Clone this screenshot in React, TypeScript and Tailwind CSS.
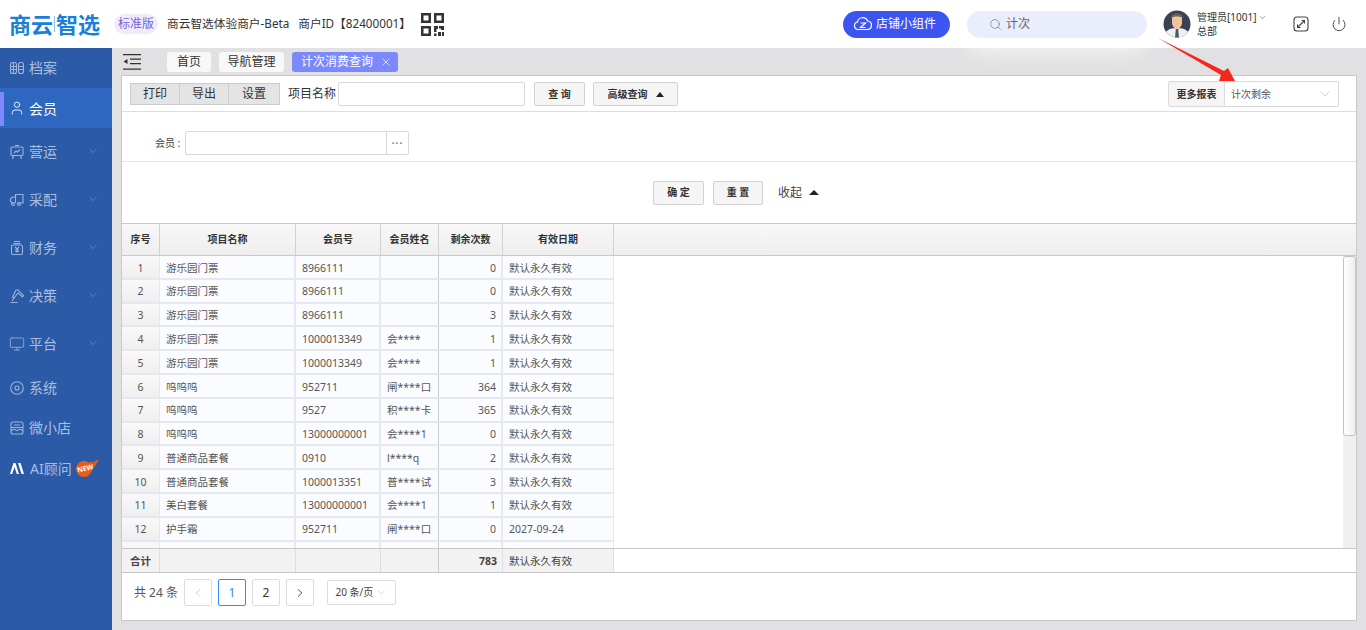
import { ChevronDown, ChevronLeft, ChevronRight, Search, Power, User, Monitor, X } from 'lucide-react'

const font = { fontFamily: '"Noto Sans", "Noto Sans CJK SC", sans-serif' }

const rows = [
  ['1', '游乐园门票', '8966111', '', '0', '默认永久有效'],
  ['2', '游乐园门票', '8966111', '', '0', '默认永久有效'],
  ['3', '游乐园门票', '8966111', '', '3', '默认永久有效'],
  ['4', '游乐园门票', '1000013349', '会****', '1', '默认永久有效'],
  ['5', '游乐园门票', '1000013349', '会****', '1', '默认永久有效'],
  ['6', '呜呜呜', '952711', '闸****口', '364', '默认永久有效'],
  ['7', '呜呜呜', '9527', '积****卡', '365', '默认永久有效'],
  ['8', '呜呜呜', '13000000001', '会****1', '0', '默认永久有效'],
  ['9', '普通商品套餐', '0910', 'l****q', '2', '默认永久有效'],
  ['10', '普通商品套餐', '1000013351', '普****试', '3', '默认永久有效'],
  ['11', '美白套餐', '13000000001', '会****1', '1', '默认永久有效'],
  ['12', '护手霜', '952711', '闸****口', '0', '2027-09-24'],
  ['', '', '', '', '', ''],
]

function Stroke({ children }: { children: React.ReactNode }) {
  return (
    <svg width="16" height="16" viewBox="0 0 16 16" fill="none" stroke="#9db4d8" strokeWidth="1.1" className="shrink-0">
      {children}
    </svg>
  )
}

const icons: Record<string, React.ReactNode> = {
  档案: (
    <Stroke>
      <rect x="1.500" y="2.500" width="6" height="11" rx="2" />
      <rect x="9.500" y="2.500" width="5" height="11" rx="2" />
      <path d="M1.500 6.500h6M1.500 9.500h6M4.500 2.500v11M9.500 6.500h5M9.500 9.500h5" />
    </Stroke>
  ),
  营运: (
    <Stroke>
      <rect x="2" y="3" width="12" height="8.5" rx="1" />
      <path d="M6 1.500h4M4.500 11.500 3.500 15M11.500 11.500l1 3.500M5 9l2-2 1.500 1L11 5.500" />
    </Stroke>
  ),
  采配: (
    <Stroke>
      <path d="M6.500 11V2.500h7.500V11H8.500M5 11H3.500L1.500 9.500V7l2-2h3" />
      <circle cx="4" cy="12" r="1.400" />
      <circle cx="10" cy="12" r="1.400" />
    </Stroke>
  ),
  财务: (
    <Stroke>
      <path d="M5 1.500h6M4.500 3.500h7" />
      <rect x="2.500" y="5" width="11" height="9.500" rx="1.500" />
      <path d="M6 7l2 2 2-2M8 9v3.500M6.200 10h3.600M6.200 11.500h3.600" />
    </Stroke>
  ),
  决策: (
    <Stroke>
      <path d="M7 2 3.500 9l1.500 1L9 5l4.500 4 1-1.500L9 2z" />
      <path d="M1.500 14.500h7M5 10c-1 1-1.500 2-1.500 3" />
    </Stroke>
  ),
  系统: (
    <Stroke>
      <circle cx="8" cy="8" r="6.300" />
      <circle cx="8" cy="8" r="2" />
    </Stroke>
  ),
  微小店: (
    <Stroke>
      <rect x="2" y="2" width="12" height="12" rx="2" />
      <path d="M2 7.500h12M5 5h6M2 10.500c2 0 2-1.500 3-1.500s1.500 1.500 3 1.500 2-1.500 3-1.500 1 1.500 3 1.500" />
    </Stroke>
  ),
}

function NavItem({ label, chevron, tall }: { label: string; chevron?: boolean; tall?: boolean }) {
  return (
    <div className={`flex items-center pr-[13px] pb-[1px] pl-[9px] text-[14px] text-[#a9bfe0] ${tall ? 'h-[48px]' : 'h-[40px]'}`}>
      <span className="mr-[4px] w-[16px]">{label === '平台' ? <Monitor size={16} strokeWidth={1.2} color="#9db4d8" /> : icons[label]}</span>
      <span>{label}</span>
      {chevron && <ChevronDown size={12} strokeWidth={1.2} color="#8ba5cf" className="ml-auto mb-[2px]" />}
    </div>
  )
}

function Sidebar() {
  return (
    <aside className="w-[112px] shrink-0 bg-[#2b5ba6]">
      <NavItem label="档案" />
      <div className="relative flex h-[40px] items-center bg-[#2e67bf] pl-[9px] text-[14px] text-white">
        <span className="absolute top-[4px] left-0 h-[34px] w-[4px] bg-[#8088ff]" />
        <User size={16} strokeWidth={1.3} className="mr-[4px]" />
        会员
      </div>
      <NavItem label="营运" chevron tall />
      <NavItem label="采配" chevron tall />
      <NavItem label="财务" chevron tall />
      <NavItem label="决策" chevron tall />
      <NavItem label="平台" chevron tall />
      <NavItem label="系统" />
      <NavItem label="微小店" />
      <div className="flex h-[40px] items-center pl-[9px] text-[14px] text-[#a9bfe0]">
        <svg width="14" height="11" viewBox="0 0 14 11" fill="#fff" className="mr-[6px] ml-px">
          <path d="M0 11 3.500 0h2L9 11H6.800L4.500 4 2.200 11zM6 0h2l3.500 11H14L10.500 0H8z" />
        </svg>
        <span>AI顾问</span>
        <span className="relative ml-[3px] flex h-[18px] w-[24px] items-center">
          <svg width="24" height="18" viewBox="0 0 24 18" className="absolute top-0 left-0">
            <path d="M8 2c2 0 4 .500 5.500 1.500L18 2.500 16.500 4.500 24 0l-2 4-2 1 1.500.500-3 2.500 1.500.500-3 1.500A8 8 0 1 1 8 2z" fill="#ef5a16" />
          </svg>
          <span className="relative -rotate-12 pl-[2px] text-[7px] leading-none font-bold text-white">NEW</span>
        </span>
      </div>
    </aside>
  )
}

function Header() {
  return (
    <header className="relative z-10 flex h-[48px] items-center bg-white pl-[9px] text-[11.700px] text-[#333]">
      <div className="flex w-[105px] items-center text-[22px] leading-none font-bold text-[#1a7fd8]">
        <span>商云</span>
        <span className="mx-[1px] h-[16px] w-px bg-[#8ec1ee]" />
        <span>智选</span>
      </div>
      <span className="rounded-full bg-[#eeecfb] px-[4px] py-[1px] text-[12px] text-[#7a62d8]">标准版</span>
      <span className="ml-[9px]">商云智选体验商户-Beta</span>
      <span className="ml-[9px]">商户ID【82400001】</span>
      <svg width="23" height="23" viewBox="0 0 23 23" className="ml-[10px]" fill="#333">
        <path d="M0 0h10v10H0zM2.500 2.500v5h5v-5zM13 0h10v10H13zm2.500 2.500v5h5v-5zM0 13h10v10H0zm2.500 2.500v5h5v-5zM13 13h4v3h-1.500v3H13zM18 13h5v4h-3v-1.500h-2zM17 19h3v4h-3zM13 20.500h2.500V23H13zM21 19h2v4h-2z" fillRule="evenodd" />
      </svg>
      <div className="ml-auto flex items-center">
        <button className="flex h-[27px] w-[107px] items-center rounded-full bg-[#3d55f0] pl-[10px] text-[12px] text-white">
          <svg width="20" height="16" viewBox="0 0 20 16" fill="none" stroke="#fff" strokeWidth="1.200" className="mr-[3px]">
            <path d="M6 13.500H5a3.800 3.800 0 0 1-.5-7.500A5.300 5.300 0 0 1 14.600 5a4.300 4.300 0 0 1 .4 8.500H6z" />
            <path d="M7.500 7h5l-5 4.500h5" />
          </svg>
          店铺小组件
        </button>
        <div className="ml-[17px] flex h-[27px] w-[180px] items-center rounded-full bg-[#eaedfb] pl-[22px] text-[12px] text-[#666] shadow-[0_10px_24px_rgba(255,255,255,0.9)]">
          <Search size={13} strokeWidth={1.3} color="#777" className="mr-[4px]" />
          计次
        </div>
        <svg width="28" height="28" viewBox="0 0 28 28" className="ml-[16px]">
          <clipPath id="av"><circle cx="14" cy="14" r="13.500" /></clipPath>
          <g clipPath="url(#av)">
            <rect width="28" height="28" fill="#3a4152" />
            <path d="M1 28c0-7 5-10 13-10s13 3 13 10z" fill="#eef1f1" />
            <path d="M9 7c0-3 10-3 10 0v6c0 3-3 6-5 6s-5-3-5-6z" fill="#efc49c" />
            <path d="M8 8c0-6 12-6 12 0-3-2-9-2-12 0z" fill="#6a6656" />
            <path d="M12.800 19h2.400l.8 9h-4z" fill="#4a5a62" />
          </g>
        </svg>
        <div className="ml-[6px] w-[71px] text-[10px] leading-[14px] whitespace-nowrap text-[#333]">
          <div className="flex items-center">
            管理员[1001]
            <ChevronDown size={9} color="#888" className="ml-[2px]" />
          </div>
          <div>总部</div>
        </div>
        <svg width="16" height="16" viewBox="0 0 16 16" fill="none" stroke="#444" strokeWidth="1.100" className="ml-[25px]">
          <rect x="1" y="1" width="14" height="14" rx="3" />
          <path d="M4.500 11.500 11.500 4.500M8.500 4.500h3v3M4.500 8.500v3h3" />
        </svg>
        <Power size={16} strokeWidth={1.400} color="#444" className="mr-[19px] ml-[22px]" />
      </div>
    </header>
  )
}

function Tabs() {
  return (
    <div className="flex h-[27px] items-center">
      <svg width="20" height="18" viewBox="0 0 20 18" className="ml-[1px]" fill="#333">
        <path d="M1 1h18v1.300H1zM8 5.500h11v1.300H8zM8 10h11v1.300H8zM1 15.500h18v1.300H1zM5.500 6v5L1.500 8.500z" />
      </svg>
      <span className="ml-[25px] flex h-[20px] w-[44px] items-center justify-center rounded-[3px] bg-[#f8f8f8] text-[12px] text-[#333]">首页</span>
      <span className="ml-[8px] flex h-[20px] w-[65px] items-center justify-center rounded-[3px] bg-[#f8f8f8] text-[12px] text-[#333]">导航管理</span>
      <span className="ml-[8px] flex h-[20px] w-[106px] items-center rounded-[3px] bg-[#7b89fb] pl-[9px] text-[12px] text-white">
        计次消费查询
        <X size={12} strokeWidth={1.400} className="ml-[7px]" />
      </span>
    </div>
  )
}

function Btn({ children, w }: { children: React.ReactNode; w: string }) {
  return (
    <button className={`flex h-[24px] items-center justify-center rounded-[2px] border border-[#d2d2d2] bg-[#f5f5f5] text-[10px] font-bold text-[#333] ${w}`}>
      {children}
    </button>
  )
}

function Toolbar() {
  return (
    <div className="flex h-[36px] items-center border-b border-[#ddd] pt-[1px] pl-[8px]">
      <div className="flex h-[22px] border border-[#ccc] bg-[#e4e4e4] text-[12px] text-[#333]">
        <span className="flex w-[49px] items-center justify-center border-r border-[#ccc]">打印</span>
        <span className="flex w-[49px] items-center justify-center border-r border-[#ccc]">导出</span>
        <span className="flex w-[50px] items-center justify-center">设置</span>
      </div>
      <span className="ml-[8px] w-[50px] text-[12px] text-[#333]">项目名称</span>
      <div className="h-[24px] w-[187px] rounded-[2px] border border-[#d9d9d9] bg-white" />
      <Btn w="w-[51px] ml-[9px]">查 询</Btn>
      <Btn w="w-[85px] ml-[8px]">
        高级查询
        <span className="ml-[8px] h-0 w-0 border-x-[4px] border-b-[5px] border-x-transparent border-b-[#222]" />
      </Btn>
      <div className="mr-[17px] ml-auto flex h-[26px] w-[171px] rounded-[2px] border border-[#d9d9d9] text-[10px]">
        <span className="flex w-[56px] items-center justify-center border-r border-[#ddd] bg-[#f5f5f5] font-bold text-[#333]">更多报表</span>
        <span className="flex flex-1 items-center pl-[6px] text-[#555]">
          计次剩余
          <ChevronDown size={16} strokeWidth={1} color="#bbb" className="mr-[5px] ml-auto" />
        </span>
      </div>
    </div>
  )
}

function Filters() {
  return (
    <>
      <div className="flex h-[50px] items-start border-b border-[#e3e3e3] pt-[19px] pl-[33px]">
        <span className="w-[30px] text-[10px] leading-[24px] whitespace-nowrap text-[#444]">会员 :</span>
        <div className="flex h-[24px] w-[224px] rounded-[2px] border border-[#d9d9d9]">
          <span className="flex-1" />
          <span className="flex w-[22px] items-center justify-center border-l border-[#d9d9d9] pb-[1px] text-[10px] leading-none font-bold tracking-[1px] text-[#777]">···</span>
        </div>
      </div>
      <div className="flex h-[61px] items-center pl-[531px]">
        <Btn w="w-[51px]">确 定</Btn>
        <Btn w="w-[50px] ml-[9px]">重 置</Btn>
        <span className="ml-[15px] text-[12px] text-[#444]">收起</span>
        <span className="ml-[7px] h-0 w-0 border-x-[5px] border-b-[5px] border-x-transparent border-b-[#222]" />
      </div>
    </>
  )
}

const colw = ['w-[38px]', 'w-[136px]', 'w-[85px]', 'w-[58px]', 'w-[64px]', 'w-[111px]']

function ThRow() {
  const heads = ['序号', '项目名称', '会员号', '会员姓名', '剩余次数', '有效日期']
  return (
    <div className="flex h-[33px] border-y border-[#c8c8c8] bg-gradient-to-b from-[#f8f8f8] to-[#eeeeee] text-[10px] font-bold text-[#333]">
      {heads.map((h, i) => (
        <div key={h} className={`flex items-center justify-center border-r border-[#d2d2d2] ${colw[i]}`}>{h}</div>
      ))}
      <div className="flex-1" />
    </div>
  )
}

function DataRow({ r }: { r: string[] }) {
  return (
    <div className="flex h-[23.800px] w-[492px] shrink-0 items-stretch border-b-2 border-[#e6e8f0] bg-[#fbfcff] text-[#555]">
      <div className="flex w-[38px] items-center justify-center border-r border-[#e6e8f0] bg-gradient-to-b from-[#f9f9f9] to-[#efefef] pt-[3px]">{r[0]}</div>
      <div className="flex w-[136px] items-center border-r-2 border-[#e6e8f0] pt-[3px] pl-[6px]">{r[1]}</div>
      <div className="flex w-[85px] items-center border-r-2 border-[#e6e8f0] pt-[3px] pl-[6px]">{r[2]}</div>
      <div className="flex w-[58px] items-center border-r border-[#c8cbd2] pt-[3px] pl-[6px]">{r[3]}</div>
      <div className="flex w-[64px] items-center justify-end border-r-2 border-[#e6e8f0] pt-[3px] pr-[5px]">{r[4]}</div>
      <div className="flex w-[111px] items-center border-r border-[#e6e8f0] pt-[3px] pl-[6px]">{r[5]}</div>
    </div>
  )
}

function FootRow() {
  return (
    <div className="flex h-[25px] border-y border-[#c8c8c8] text-[10.500px] text-[#444]">
      <div className="flex w-[38px] items-center justify-center border-r border-[#ddd] bg-[#f2f2f2] pt-[2px] font-bold">合计</div>
      <div className="w-[136px] border-r border-[#ddd] bg-[#f2f2f2]" />
      <div className="w-[85px] border-r border-[#ddd] bg-[#f2f2f2]" />
      <div className="w-[58px] border-r border-[#c8cbd2] bg-[#f2f2f2]" />
      <div className="flex w-[64px] items-center justify-end border-r border-[#ddd] bg-[#f2f2f2] pt-[2px] pr-[5px] font-bold">783</div>
      <div className="flex w-[111px] items-center border-r border-[#ddd] bg-[#f2f2f2] pt-[2px] pl-[6px]">默认永久有效</div>
    </div>
  )
}

function Pager() {
  const box = 'flex h-[27px] w-[28px] items-center justify-center rounded-[2px] border text-[12px]'
  return (
    <div className="flex h-[47px] items-start pt-[6px] pl-[12px] text-[12px] text-[#555]">
      <span className="mr-[6px] leading-[27px]">共 24 条</span>
      <span className={`${box} border-[#ddd]`}><ChevronLeft size={14} strokeWidth={1.200} color="#bbb" /></span>
      <span className={`${box} ml-[6px] border-[#2d8cf0] text-[#2d8cf0]`}>1</span>
      <span className={`${box} ml-[6px] border-[#ddd] text-[#333]`}>2</span>
      <span className={`${box} ml-[6px] border-[#ddd]`}><ChevronRight size={14} strokeWidth={1.500} color="#333" /></span>
      <span className="mt-px ml-[13px] flex h-[25px] w-[69px] items-center justify-center rounded-[2px] border border-[#ddd] text-[10px] text-[#444]">
        20 条/页
        <ChevronDown size={11} strokeWidth={1} color="#aaa" className="ml-[3px]" />
      </span>
    </div>
  )
}

export default function App() {
  return (
    <div className="relative h-[630px] w-[1366px] overflow-hidden bg-[#e1e1e3]" style={font}>
      <Header />
      <div className="flex h-[582px]">
        <Sidebar />
        <main className="flex-1 px-[9px]">
          <Tabs />
          <div className="flex h-[546px] flex-col border border-[#c9c9c9] bg-white">
            <Toolbar />
            <Filters />
            <ThRow />
            <div className="relative flex h-[292px] flex-col overflow-hidden text-[10.500px]">
              {rows.map((r, i) => <DataRow key={i} r={r} />)}
              <div className="absolute top-0 right-0 h-full w-[13px] bg-[#f0f0f0]">
                <div className="h-[180px] rounded-[3px] border border-[#c4c4c4] bg-gradient-to-r from-[#ffffff] to-[#eeeeee]" />
              </div>
            </div>
            <FootRow />
            <Pager />
          </div>
        </main>
      </div>
      <svg width="90" height="60" viewBox="0 0 90 60" className="pointer-events-none absolute top-[34px] left-[1150px] z-20">
        <path d="M8 4 74 37 78 34 85 47 69 47 71 41z" fill="#f5281e" />
      </svg>
    </div>
  )
}
